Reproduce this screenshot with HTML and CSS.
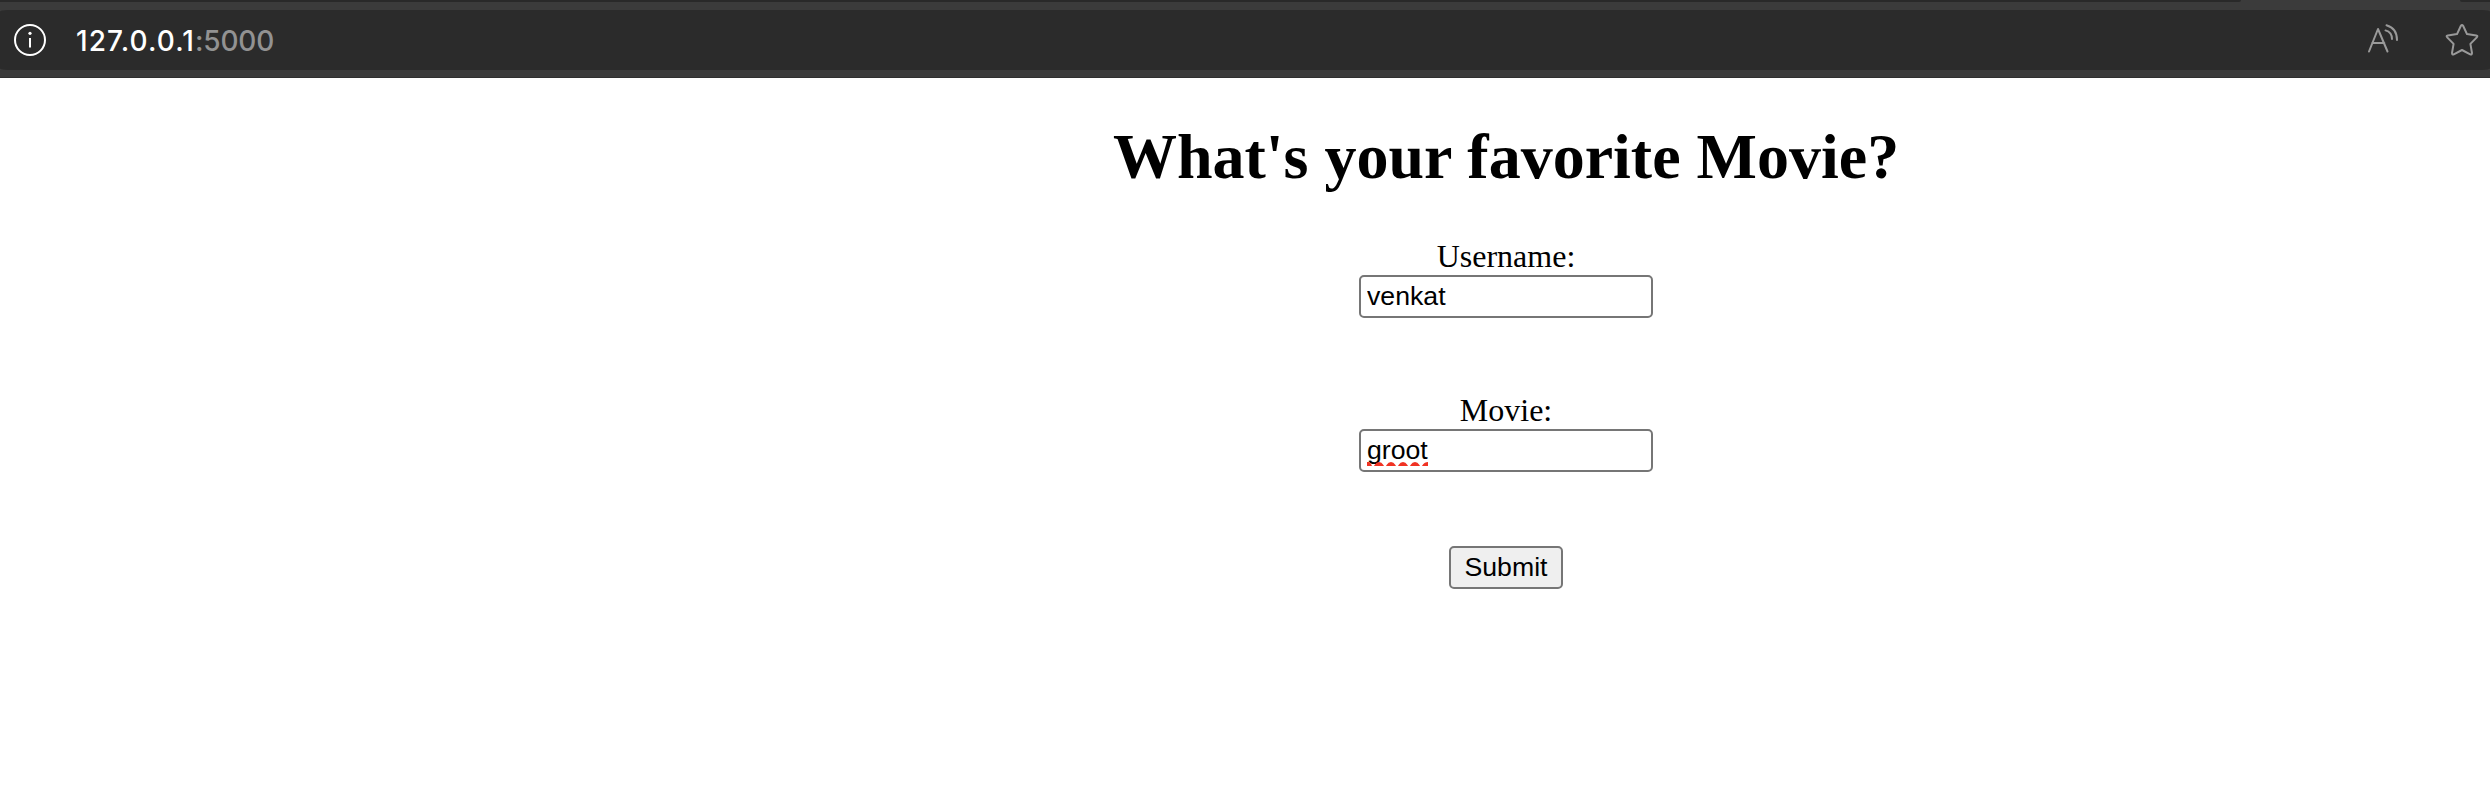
FILE: index.html
```
<!DOCTYPE html>
<html lang="en">
<head>
<meta charset="utf-8">
<title>Favorite Movie</title>
<link rel="stylesheet" href="styles.css">
</head>
<body>
<header class="toolbar">
  <div class="tabstrip"><span class="tabs-left"></span><span class="tabs-right"></span></div>
  <div class="address">
    <svg class="info" width="34" height="34" viewBox="0 0 34 34" fill="none" stroke="#fff" stroke-width="2">
      <circle cx="17" cy="17" r="15"/>
      <path d="M17 15v9.500" stroke-linecap="butt"/>
      <circle cx="17" cy="10.300" r="1.600" fill="#fff" stroke="none"/>
    </svg>
    <div class="url"><span class="host">127.0.0.1</span><span class="port">:5000</span></div>
    <svg class="read" width="34" height="34" viewBox="0 0 34 34" fill="none" stroke="#999" stroke-width="2" stroke-linecap="round" stroke-linejoin="round">
      <path d="M3 28.500L12 6l9.500 22.500M6.200 20h12.100M20.500 2.200C27 4 31 9.500 31 17M19.500 7.400C23.500 8.500 26 11.500 26 16"/>
    </svg>
    <svg class="star" width="34" height="34" viewBox="0 0 34 34" fill="none" stroke="#999" stroke-width="2" stroke-linejoin="round">
      <path d="M15.900 2.800Q17 1 18.100 2.800L22 11.100L31.200 12.400Q33.200 12.900 31.800 14.400L25.400 20.900L27 30Q27 32 25.200 31.300L17 27L8.800 31.300Q7 32 7 30L8.600 20.900L2.200 14.400Q.8 12.900 2.800 12.400L12 11.100Z"/>
    </svg>
  </div>
</header>
<main class="page">
  <h1 class="title">What's your favorite Movie?</h1>
  <form class="form">
    <label class="label" for="username">Username:</label>
    <input class="field" id="username" type="text" value="venkat">
    <label class="label label-movie" for="movie">Movie:</label>
    <div class="movie-wrap">
      <input class="field" id="movie" type="text" value="groot" spellcheck="false">
      <svg class="misspelled" width="61" height="4" viewBox="0 0 61 4" fill="#f03223">
        <path d="M0 4V0H2Q4 1 5 4ZM7 4Q9 0 12 0Q15 0 17 4ZM19 4Q21 0 24 0Q27 0 29 4ZM31 4Q33 0 36 0Q39 0 41 4ZM43 4Q45 0 48 0Q51 0 53 4ZM55 4Q57 0 61 0V4Z"/>
      </svg>
    </div>
    <button class="submit" type="button">Submit</button>
  </form>
</main>
</body>
</html>
```
FILE: styles.css
```
* { box-sizing: border-box; }
body {
  margin: 0;
  background: #fff;
  color: #000;
}
.toolbar {
  height: 78px;
  background: #3b3b3b;
  border-bottom: 1px solid #303030;
}
.tabstrip {
  height: 10px;
  display: flex;
  justify-content: space-between;
  align-items: flex-start;
}
.tabs-left, .tabs-right { height: 2px; background: #292929; }
.tabs-left { width: 2241px; border-bottom-right-radius: 4px; }
.tabs-right { width: 30px; border-bottom-left-radius: 4px; }
.address {
  height: 60px;
  display: flex;
  align-items: center;
  padding: 0 11px 0 13px;
  background: #2b2b2b;
  border-radius: 8px / 1.5px;
}
.url {
  flex: 1;
  margin-left: 29px;
  padding-top: 1px;
  font: 500 28px/34px Inter, sans-serif;
  color: #fff;
}
.host { letter-spacing: 1.1px; }
.port { color: #929292; letter-spacing: -0.2px; }
.star { margin-left: 45px; }
.page {
  padding-left: 522px;
  font: 32px/37px "Liberation Serif", serif;
  text-align: center;
}
.title {
  margin: 0;
  padding-top: 42px;
  font-size: 64px;
  line-height: 74px;
  font-weight: 700;
}
.form {
  display: flex;
  flex-direction: column;
  align-items: center;
  padding-top: 44px;
}
.label { height: 37px; }
.label-movie { margin-top: 74px; }
.field {
  display: block;
  width: 294px;
  height: 43px;
  margin: 0;
  padding: 0 6px;
  border: 2px solid #767676;
  border-radius: 5px;
  background: #fff;
  color: #000;
  font: 26.667px/38px "Liberation Sans", Arial, sans-serif;
  outline: none;
}
.movie-wrap { position: relative; }
.misspelled {
  position: absolute;
  left: 8px;
  top: 33px;
}
.submit {
  width: 114px;
  height: 43px;
  margin-top: 74px;
  padding: 0;
  border: 2px solid #767676;
  border-radius: 5px;
  background: #efefef;
  color: #000;
  font: 26.667px/37px "Liberation Sans", Arial, sans-serif;
}
```
